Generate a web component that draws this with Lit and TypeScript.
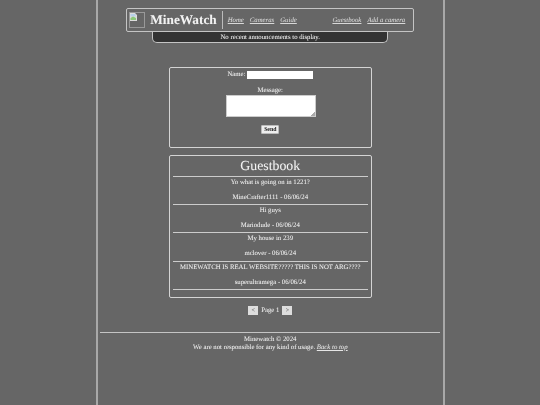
import { LitElement, html, css } from "lit";
import { customElement } from "lit/decorators.js";

const entries = [
  ["Yo what is going on in 1221?", "MineCrafter1111 - 06/06/24"],
  ["Hi guys", "Mariodude - 06/06/24"],
  ["My house in 239", "mclover - 06/06/24"],
  ["MINEWATCH IS REAL WEBSITE????? THIS IS NOT ARG????", "superultramega - 06/06/24"],
];

@customElement("app-root")
export class AppRoot extends LitElement {
  static styles = css`
    :host { display: block; height: 405px; overflow: hidden; background: #666; color: #f2f2f2;
      font-family: "Liberation Serif", serif; font-size: 6.75px; line-height: 8.5px; text-rendering: geometricPrecision; text-shadow: 0 0 1px rgba(255,255,255,.22); }
    .page { box-sizing: border-box; width: 348.5px; height: 405px; margin-left: 96px; padding: 8px 2px 0;
      border-left: 2px solid #a8a8a8; border-right: 2px solid #a8a8a8; display: flex; flex-direction: column; align-items: center; will-change: transform; }
    .header { box-sizing: border-box; width: 288px; height: 24px; border: 1px solid #c4c4c4; border-radius: 2px;
      display: flex; align-items: center; padding-left: 2px; position: relative; z-index: 1; background: #666; }
    .logo { width: 16px; height: 16px; border: 1px solid #999; box-sizing: border-box; flex: none; display: flex; }
    .logo svg { display: block; }
    .brand { font-size: 13.3px; font-weight: bold; margin-left: 5px; line-height: 20px; }
    .nav { box-sizing: border-box; display: flex; align-items: center; flex: 1; height: 18px; margin-left: 5px; padding: 2px 0 0 5px; border-left: 1px solid #bbb; }
    a { color: #e6e6e6; font-style: italic; text-decoration: underline; }
    .nav a { margin-right: 6px; color: #d8d8d8; }
    .nav a:last-child { margin-right: 8px; }
    .spacer { flex: 1; }
    .announce { box-sizing: border-box; width: 236px; height: 12px; margin-top: -1px; padding-top: 1px; background: #333;
      border: 1px solid #c4c4c4; border-top: none; border-radius: 0 0 5px 5px; text-align: center; line-height: 11px; }
    .card { box-sizing: border-box; width: 203px; border: 1px solid #d4d4d4; border-radius: 2px; text-align: center; }
    .form { height: 81px; margin-top: 24px; padding-top: 2px; }
    .name { height: 9px; display: flex; justify-content: center; align-items: center; gap: 1.5px; }
    .name span { position: relative; top: 0.6px; }
    .name input { box-sizing: border-box; width: 66px; height: 8px; border: none; padding: 0; background: #fff; display: block; }
    .label { margin-top: 7.5px; line-height: 8px; }
    textarea { box-sizing: border-box; display: block; width: 90px; height: 22px; margin: 0 auto 0 56px; padding: 0; resize: none; border: 1px solid #ccc;
      background: linear-gradient(135deg, transparent 50%, #aaa 50%) right bottom / 4px 4px no-repeat, #fff; }
    button.send { font: bold 5.8px "Liberation Serif", serif; color: #222; background: #eee; border: 1px solid #bbb;
      height: 9px; width: 18px; padding: 0; border-radius: 1px; display: block; margin: 8px auto 0; line-height: 6px; text-shadow: none; }
    .book { margin-top: 7px; height: 143px; padding: 0 3px; }
    h1 { font-size: 13.8px; font-weight: normal; line-height: 20px; margin: 0; }
    .entry { border-top: 1px solid #ccc; height: 28.2px; padding-top: 2px; box-sizing: border-box; display: flex; flex-direction: column; gap: 6.6px; }
    .end { border-top: 1px solid #ccc; }
    .pager { display: flex; align-items: center; gap: 3px; margin-top: 8px; height: 9px; }
    .pager span { padding-top: 1px; }
    .pager button { width: 10px; height: 9.5px; padding: 0; border: none; background: #ddd; color: #555; font: 6px "Liberation Serif", serif; line-height: 9px; text-shadow: none; }
    hr { width: 340px; border: none; border-top: 1px solid #c4c4c4; margin: 16.5px 0 0; }
    .foot { text-align: center; margin-top: 3px; line-height: 8px; }
  `;

  render() {
    return html`<div class="page">
      <header class="header">
        <div class="logo"><svg width="7" height="8" viewBox="0 0 7 8"><path d="M0 0H5L7 2V8H0Z" fill="#ddd"/><rect x=".5" y="1" width="5" height="2.5" fill="#b8cfe8"/><path d="M.5 5 L3 3.5 L6 5 V7 H.5Z" fill="#8bc878"/></svg></div>
        <span class="brand">MineWatch</span>
        <nav class="nav">
          <a href="#">Home</a><a href="#">Cameras</a><a href="#">Guide</a>
          <span class="spacer"></span>
          <a href="#">Guestbook</a><a href="#">Add a camera</a>
        </nav>
      </header>
      <div class="announce">No recent announcements to display.</div>
      <section class="card form">
        <div class="name"><span>Name:</span><input type="text" /></div>
        <div class="label">Message:</div>
        <textarea></textarea>
        <button class="send">Send</button>
      </section>
      <section class="card book">
        <h1>Guestbook</h1>
        ${entries.map(([m, a]) => html`<div class="entry"><span>${m}</span><span>${a}</span></div>`)}
        <div class="end"></div>
      </section>
      <div class="pager"><button>&lt;</button><span>Page 1</span><button>&gt;</button></div>
      <hr />
      <footer class="foot">Minewatch © 2024<br />We are not responsible for any kind of usage. <a href="#">Back to top</a></footer>
    </div>`;
  }
}
